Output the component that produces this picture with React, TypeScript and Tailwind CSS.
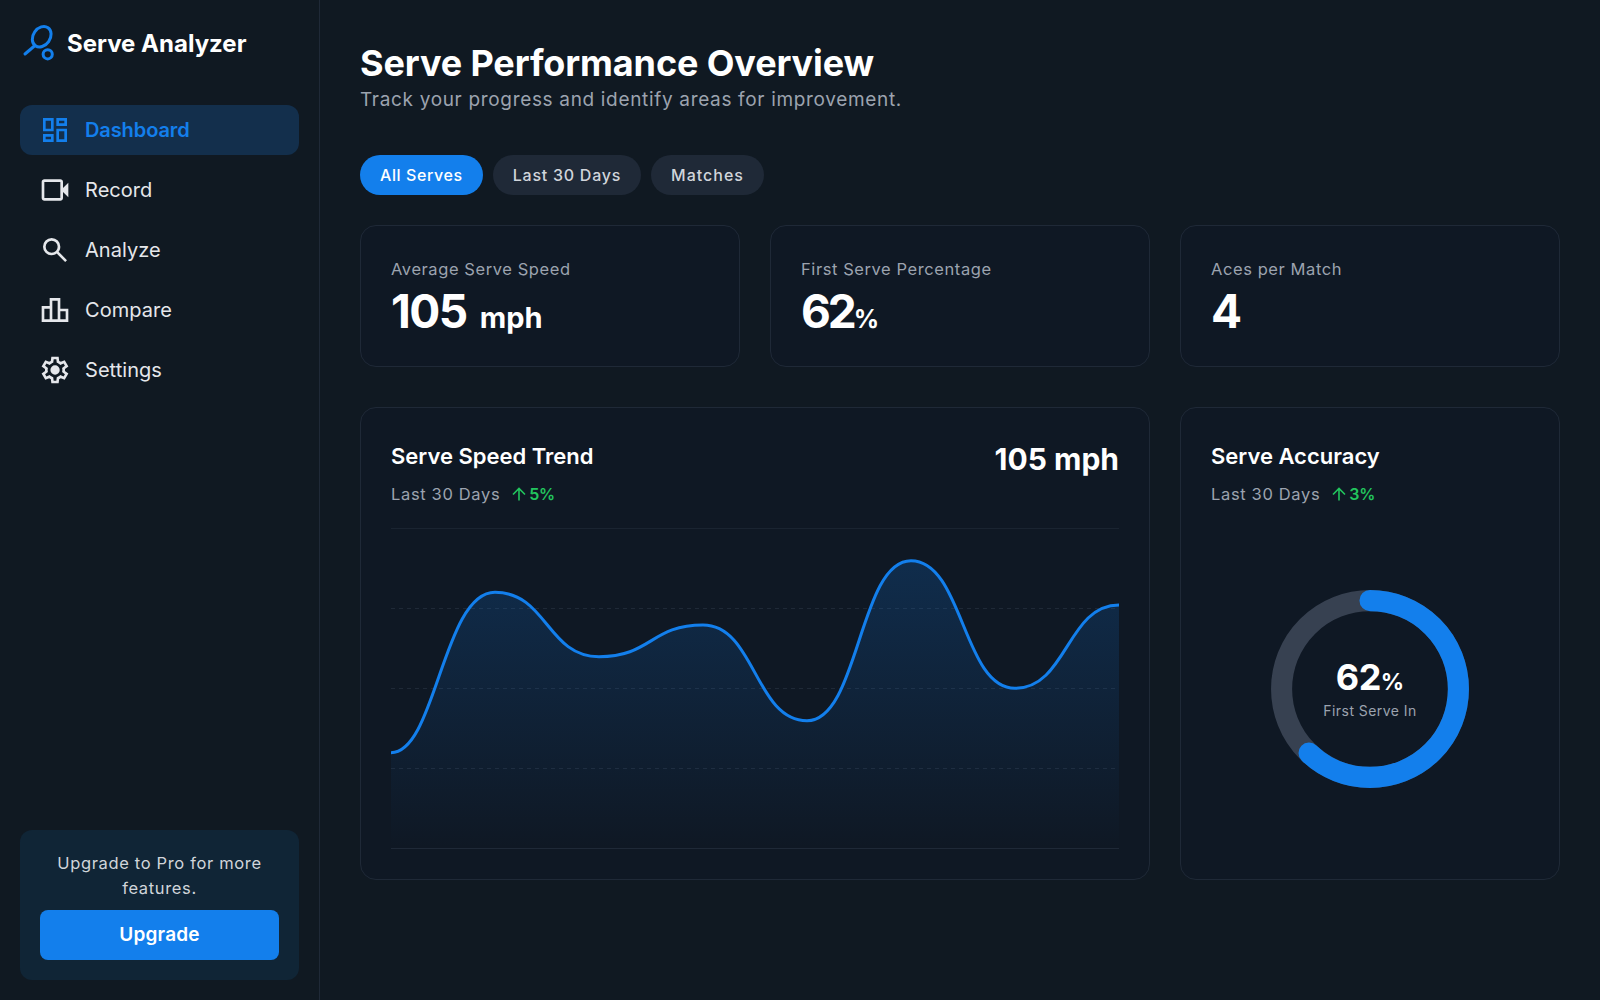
const font = { fontFamily: "Inter, 'Liberation Sans', sans-serif" };

function Logo() {
  return (
    <svg width="36" height="38" viewBox="0 0 36 38" fill="none" stroke="#137fec" strokeWidth="3" className="shrink-0">
      <ellipse cx="19.7" cy="12.7" rx="8.5" ry="11" transform="rotate(35 19.7 12.7)" />
      <path d="M13 21.5L3 30" strokeLinecap="round" />
      <circle cx="25.7" cy="30.3" r="4.6" />
    </svg>
  );
}

const icons: Record<string, string> = {
  Dashboard: "M13 9V3h8v6Zm-10 4V3h8v10Zm10 8V11h8v10ZM3 21v-6h8v6Zm2-10h4V5H5Zm10 8h4v-6h-4Zm0-12h4V5h-4ZM5 19h4v-2H5Z",
  Record: "M4 20q-.825 0-1.412-.587Q2 18.825 2 18V6q0-.825.588-1.412Q3.175 4 4 4h12q.825 0 1.413.588Q18 5.175 18 6v4.5l4-4v11l-4-4V18q0 .825-.587 1.413Q16.825 20 16 20Zm0-2h12V6H4v12Z",
  Analyze: "M19.6 21l-6.3-6.3q-.75.6-1.725.95Q10.6 16 9.5 16q-2.725 0-4.612-1.887Q3 12.225 3 9.5q0-2.725 1.888-4.613Q6.775 3 9.5 3t4.613 1.887Q16 6.775 16 9.5q0 1.1-.35 2.075-.35.975-.95 1.725l6.3 6.3ZM9.5 14q1.875 0 3.188-1.312Q14 11.375 14 9.5q0-1.875-1.312-3.188Q11.375 5 9.5 5 7.625 5 6.312 6.312 5 7.625 5 9.5q0 1.875 1.312 3.188Q7.625 14 9.5 14Z",
  Compare: "M4 19h4v-8H4v8Zm6 0h4V5h-4v14Zm6 0h4v-6h-4v6ZM2 21V9h6V3h8v8h6v10H2Z",
  Settings: "m9.25 22-.4-3.2q-.325-.125-.612-.3-.288-.175-.563-.375L4.7 19.375l-2.75-4.75 2.575-1.95Q4.5 12.5 4.5 12.337v-.675q0-.162.025-.337L1.95 9.375l2.75-4.75 2.975 1.25q.275-.2.575-.375.3-.175.6-.3l.4-3.2h5.5l.4 3.2q.325.125.613.3.287.175.562.375l2.975-1.25 2.75 4.75-2.575 1.95q.025.175.025.337v.675q0 .163-.05.338l2.575 1.95-2.75 4.75-2.95-1.25q-.275.2-.575.375-.3.175-.6.3l-.4 3.2H9.25ZM11 20h1.975l.35-2.65q.775-.2 1.438-.588.662-.387 1.212-.937l2.475 1.025.975-1.7-2.15-1.625q.125-.35.175-.738.05-.387.05-.787t-.05-.788q-.05-.387-.175-.737l2.15-1.625-.975-1.7-2.475 1.05q-.55-.575-1.212-.963-.663-.387-1.438-.587L13 4h-1.975l-.35 2.65q-.775.2-1.437.587-.663.388-1.213.938L5.55 7.15l-.975 1.7 2.15 1.6q-.125.375-.175.75-.05.375-.05.8 0 .4.05.775t.175.75l-2.15 1.625.975 1.7 2.475-1.05q.55.575 1.213.962.662.388 1.437.588L11 20Zm1.05-4.5q1.45 0 2.475-1.025Q15.55 13.45 15.55 12q0-1.45-1.025-2.475Q13.5 8.5 12.05 8.5q-1.475 0-2.488 1.025Q8.55 10.55 8.55 12q0 1.45 1.012 2.475Q10.575 15.5 12.05 15.5Z",
};

function NavItem({ label, active }: { label: string; active?: boolean }) {
  return (
    <div className={active ? "flex h-[50px] items-center gap-[14px] rounded-xl bg-[#132f4c] pl-[19px] text-[#137fec]" : "flex h-[50px] items-center gap-[14px] rounded-xl pl-[19px] text-[#e5e7eb]"}>
      <svg width="32" height="32" viewBox="0 0 24 24" fill="currentColor" className="shrink-0">
        <path d={icons[label]} />
      </svg>
      <span className={active ? "text-[20px] font-semibold tracking-[-0.1px]" : "text-[20px] font-normal tracking-[0.05px]"}>{label}</span>
    </div>
  );
}

function Stat({ label, children }: { label: string; children: React.ReactNode }) {
  return (
    <div className="h-[142px] w-[380px] rounded-2xl border border-[#1f2937] bg-[#0f1824] px-[30px] pt-[31px]">
      <div className="text-[16.5px] leading-6 tracking-[0.58px] text-[#9ca3af]">{label}</div>
      <div className="mt-[2px] flex items-baseline font-bold text-white">{children}</div>
    </div>
  );
}

function Trend({ value }: { value: string }) {
  return (
    <div className="mt-3 flex items-center text-[16.5px] leading-6">
      <span className="tracking-[0.65px] text-[#9ca3af]">Last 30 Days</span>
      <span className="ml-[11px] flex items-center text-[16px] font-semibold tracking-[-0.3px] text-[#22c55e]">
        <svg width="16" height="16" viewBox="0 0 16 16" fill="none" stroke="currentColor" strokeWidth="1.6" className="mr-[2px]">
          <path d="M8 14.5V2.5M2 8.5L8 2.5l6 6" />
        </svg>
        {value}
      </span>
    </div>
  );
}

const line = "M0 224.7C45 224.7 52 64.3 104 64.3C156 64.3 156 128.7 208 128.7C260 128.7 260 97 312 97C364 97 364 192.7 416 192.7C468 192.7 468 32.7 520 32.7C572 32.7 572 160.3 624 160.3C676 160.3 676 77 728 77";

function Chart() {
  return (
    <div className="h-[321px] w-[728px]">
      <svg width="728" height="321" viewBox="0 0 728 321" fill="none" className="block">
        <defs>
          <linearGradient id="area" x1="0" y1="0" x2="0" y2="1">
            <stop offset="0%" stopColor="#137fec" stopOpacity="0.2" />
            <stop offset="100%" stopColor="#137fec" stopOpacity="0" />
          </linearGradient>
        </defs>
        <path d="M0 0.5H728" stroke="#1a2431" />
        <path d="M0 80.5H728M0 160.5H728M0 240.5H728" stroke="#1f2937" strokeDasharray="4 4" />
        <path d="M0 320.5H728" stroke="#1f2937" />
        <path d={line + "V320H0Z"} fill="url(#area)" />
        <path d={line} stroke="#137fec" strokeWidth="3" />
      </svg>
    </div>
  );
}

export default function App() {
  return (
    <div className="flex h-[1000px] w-[1600px] bg-[#101922] text-white" style={font}>
      <aside className="flex w-[320px] shrink-0 flex-col border-r border-[#1f2937] px-5 pb-5">
        <div className="flex h-[86px] items-center gap-[9px] pl-[2px]">
          <Logo />
          <span className="pt-[2px] text-[24px] font-bold">Serve Analyzer</span>
        </div>
        <nav className="mt-[19px] flex flex-col gap-[10px]">
          <NavItem label="Dashboard" active />
          <NavItem label="Record" />
          <NavItem label="Analyze" />
          <NavItem label="Compare" />
          <NavItem label="Settings" />
        </nav>
        <div className="mt-auto rounded-xl bg-[#102536] px-5 pt-[21px] pb-5 text-center">
          <p className="mb-[9px] text-[16.5px] leading-[25px] tracking-[0.65px] text-[#d1d5db]">Upgrade to Pro for more features.</p>
          <div className="flex h-[50px] items-center justify-center rounded-lg bg-[#137fec] text-[19px] font-semibold tracking-[0.2px] text-white">Upgrade</div>
        </div>
      </aside>
      <main className="flex-1 px-10 pt-[41px]">
        <h1 className="text-[36px] leading-[44px] font-bold tracking-[-0.12px]">Serve Performance Overview</h1>
        <p className="mt-px text-[19px] leading-7 tracking-[0.67px] text-[#9ca3af]">Track your progress and identify areas for improvement.</p>
        <div className="mt-[41px] flex gap-[10px]">
          <div className="flex h-10 items-center rounded-full bg-[#137fec] px-5 text-[16px] font-medium tracking-[0.6px] text-white">All Serves</div>
          <div className="flex h-10 items-center rounded-full bg-[#1f2937] px-5 text-[16px] font-medium tracking-[0.75px] text-[#d1d5db]">Last 30 Days</div>
          <div className="flex h-10 items-center rounded-full bg-[#1f2937] px-5 text-[16px] font-medium tracking-[1px] text-[#d1d5db]">Matches</div>
        </div>
        <div className="mt-[30px] flex gap-[30px]">
          <Stat label="Average Serve Speed"><span className="text-[46px] leading-[56px] tracking-[-1.5px]">105</span><span className="ml-[13px] text-[29px] leading-[54px]">mph</span></Stat>
          <Stat label="First Serve Percentage"><span className="text-[46px] leading-[56px] tracking-[-3px]">62</span><span className="text-[25px]">%</span></Stat>
          <Stat label="Aces per Match"><span className="text-[46px] leading-[56px]">4</span></Stat>
        </div>
        <div className="mt-10 flex gap-[30px]">
          <section className="h-[473px] w-[790px] rounded-2xl border border-[#1f2937] bg-[#0f1824] p-[30px]">
            <div className="flex h-[90px] items-start justify-between pt-1">
              <div>
                <h2 className="text-[22px] leading-7 font-semibold">Serve Speed Trend</h2>
                <Trend value="5%" />
              </div>
              <div className="-mt-px text-[30px] leading-9 font-bold">105 mph</div>
            </div>
            <Chart />
          </section>
          <section className="flex h-[473px] w-[380px] flex-col rounded-2xl border border-[#1f2937] bg-[#0f1824] p-[30px]">
            <div className="pt-1">
              <h2 className="text-[22px] leading-7 font-semibold">Serve Accuracy</h2>
              <Trend value="3%" />
            </div>
            <div className="flex flex-1 items-center justify-center">
              <div className="relative mt-[23px] h-[200px] w-[200px]">
                <svg width="200" height="200" viewBox="0 0 36 36" fill="none" className="-rotate-90">
                  <circle cx="18" cy="18" r="15.9155" stroke="#374151" strokeWidth="3.8" />
                  <circle cx="18" cy="18" r="15.9155" stroke="#137fec" strokeWidth="3.8" strokeDasharray="62 100" strokeLinecap="round" />
                </svg>
                <div className="absolute inset-0 flex flex-col items-center justify-center">
                  <div className="flex items-baseline font-bold"><span className="text-[36px] leading-10 tracking-[-0.5px]">62</span><span className="text-[23px]">%</span></div>
                  <div className="mt-px text-[14px] leading-5 tracking-[0.44px] text-[#9ca3af]">First Serve In</div>
                </div>
              </div>
            </div>
          </section>
        </div>
      </main>
    </div>
  );
}
